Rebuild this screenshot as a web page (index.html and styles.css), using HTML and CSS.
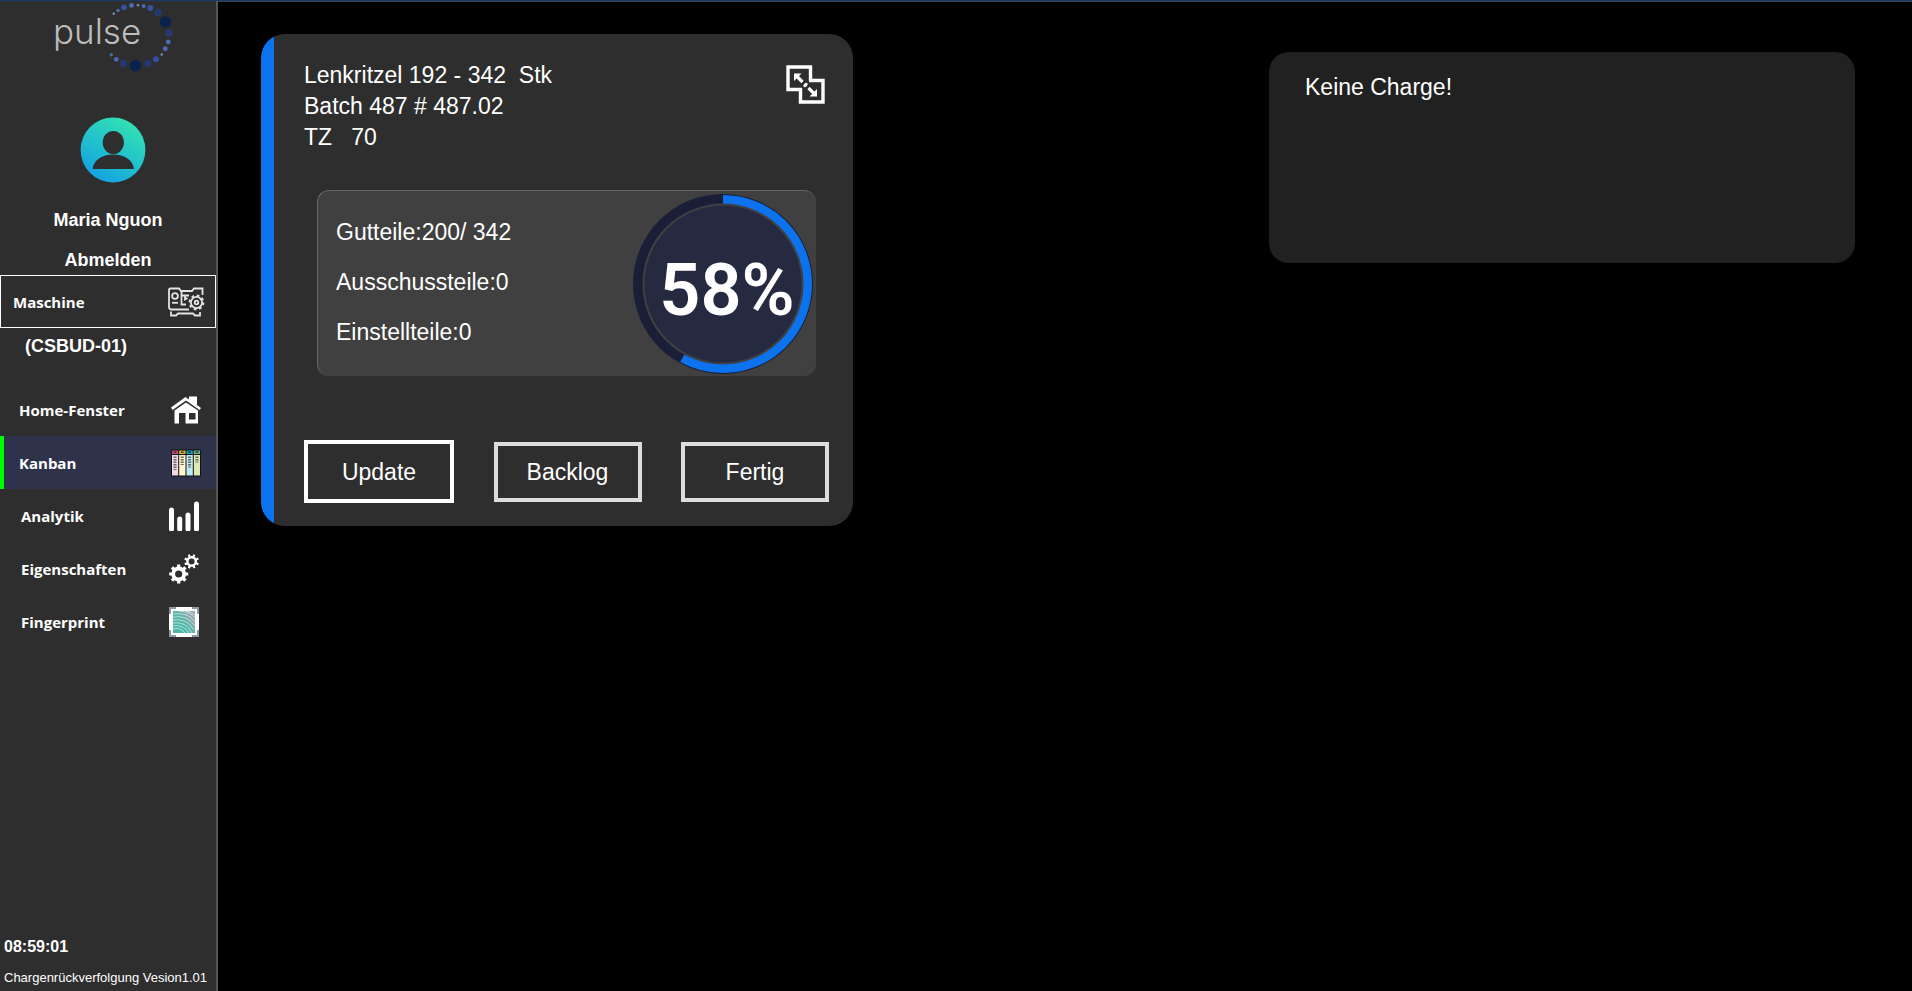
FILE: index.html
```html
<!DOCTYPE html>
<html lang="de">
<head>
<meta charset="utf-8">
<title>Pulse – Kanban</title>
<link rel="stylesheet" href="styles.css">
</head>
<body>
<div class="app">
  <aside class="sidebar">
    <svg class="logo" viewBox="54 1 120 72" role="img" aria-label="pulse">
      <text class="logo-text" x="53" y="44">pulse</text>
      <g fill="#7f93b5"><circle cx="113.7" cy="13.7" r="1.2"/><circle cx="138" cy="5.3" r="1.2"/><circle cx="161.7" cy="54.5" r="1.2"/></g>
      <g fill="#4a6cb0"><circle cx="118" cy="10.5" r="1.8"/><circle cx="131.5" cy="5.4" r="2.4"/><circle cx="143.7" cy="6" r="1.9"/><circle cx="168.3" cy="42" r="2.4"/><circle cx="165.3" cy="48.7" r="2.4"/><circle cx="116.3" cy="59.3" r="2.4"/><circle cx="111.3" cy="54.7" r="1.7"/></g>
      <g fill="#3450a0"><circle cx="124" cy="7.3" r="2.9"/><circle cx="150.3" cy="8" r="3"/><circle cx="156" cy="59.3" r="3"/></g>
      <g fill="#25386f"><circle cx="158" cy="12.7" r="3.8"/><circle cx="169" cy="33" r="3.8"/><circle cx="147.7" cy="63.5" r="3.8"/><circle cx="123.5" cy="63.5" r="3.8"/></g>
      <g fill="#06224d"><circle cx="165.5" cy="22" r="5.7"/><circle cx="135.5" cy="65.7" r="5.7"/></g>
    </svg>
    <svg class="avatar" viewBox="0 0 66 66" aria-hidden="true">
      <defs><linearGradient id="avatar-fill" x1="0.2" y1="1" x2="0.8" y2="0"><stop offset="0" stop-color="#129fe6"/><stop offset="0.5" stop-color="#22c3cb"/><stop offset="1" stop-color="#34e4ae"/></linearGradient></defs>
      <circle cx="33" cy="33" r="32.4" fill="url(#avatar-fill)"/>
      <ellipse cx="33.3" cy="25.5" rx="10.6" ry="11.5" fill="#2e2e2e"/>
      <path d="M12.6 52C13.5 43 22 37.5 33.3 37.5S53 43 54 52Z" fill="#2e2e2e"/>
    </svg>
    <p class="user">Maria Nguon</p>
    <a class="logout" href="#abmelden">Abmelden</a>
    <button class="machine" type="button">Maschine
      <svg class="machine-icon" viewBox="0 0 38 30" fill="none" stroke="#e4e4e4" stroke-width="1.8" aria-hidden="true">
        <path d="M22 22.5H4.500Q2 22.500 2 20V3Q2 1.500 3.500 1.500H12L14 4H25L27 1.500H35.500V8"/>
        <path d="M14.500 3V17.500H19M14.500 8.500H22M18 8.500V12.500L20.500 11"/>
        <circle cx="8" cy="9" r="2.900"/><path d="M5 15.800H11"/>
        <path d="M4 24.500V28.500H9L11 26.500H26L28 28.500H33V25"/>
        <circle cx="29.500" cy="15.500" r="5.600"/><circle cx="29.500" cy="15.500" r="1.800"/>
        <circle cx="29.500" cy="15.500" r="7" stroke-width="1.800" stroke-dasharray="2.750 2.750"/>
      </svg>
    </button>
    <p class="machine-id">(CSBUD-01)</p>
    <nav class="nav">
      <a class="nav-item" href="#home">Home-Fenster
        <svg class="nav-icon" viewBox="0 0 30 30" aria-hidden="true">
          <path d="M0 12.500 14.500 2 18 4.500V1.500H26V10L30 13 28.500 15 15 5.500 1.500 15Z" fill="#fff"/>
          <path fill-rule="evenodd" d="M3.500 15.500 15 7.500 27 15.500V28.500H14.500V18H8V28.500H3.500ZM18 18V24.500H24.500V18Z" fill="#fff"/>
        </svg>
      </a>
      <a class="nav-item nav-item-active" href="#kanban" aria-current="page">Kanban
        <svg class="nav-icon" viewBox="0 0 30 30" aria-hidden="true">
          <rect y="1.500" width="30" height="27" rx="1" fill="#111"/>
          <path d="M1 2.500H7.200V6H1Z" fill="#c9527c"/><path d="M8.200 2.500H14.500V6H8.200Z" fill="#ddb43c"/><path d="M15.500 2.500H21.800V6H15.500Z" fill="#16a3c4"/><path d="M22.800 2.500H29V6H22.800Z" fill="#70b78b"/>
          <path d="M1 7H7.200V27.500H1Z" fill="#f3d8e8"/><path d="M8.200 7H14.500V27.500H8.200Z" fill="#fff5cf"/><path d="M15.500 7H21.800V27.500H15.500Z" fill="#bdebf3"/><path d="M22.800 7H29V27.500H22.800Z" fill="#dcebb0"/>
          <g stroke="#666" stroke-width="3" stroke-dasharray="1.500 1"><path d="M4 8.500V22"/><path d="M11.200 8.500V17"/><path d="M18.600 8.500V19.500"/><path d="M26 8.500V14.500"/></g>
          <path d="M2.500 4.200H5.500M10 4.200H12.700M17.200 4.200H20M24.500 4.200H27.500" stroke="#222" stroke-width="1.200"/>
        </svg>
      </a>
      <a class="nav-item nav-item-inset" href="#analytik">Analytik
        <svg class="nav-icon" viewBox="0 0 30 30" stroke="#fff" stroke-width="5" stroke-linecap="round" aria-hidden="true"><path d="M2.500 9V28M10.700 18V28M19 14V28M27.500 3V28"/></svg>
      </a>
      <a class="nav-item nav-item-inset" href="#eigenschaften">Eigenschaften
        <svg class="nav-icon" viewBox="0 0 30 30" fill="none" stroke="#fff" aria-hidden="true">
          <circle cx="9.700" cy="20" r="5.500" stroke-width="3.800"/><path d="M9.700 10.500V14M9.700 26V29.500M.2 20H3.500M16 20H19.200M3 13.300 5.500 15.800M14 24.200 16.400 26.700M16.400 13.300 14 15.800M5.500 24.200 3 26.700" stroke-width="3.200"/>
          <circle cx="22.600" cy="7.400" r="4.200" stroke-width="2.400"/><g transform="rotate(22 22.600 7.400)"><path d="M22.600 0V3M22.600 11.800V14.800M15.200 7.400H18.200M27 7.400H30M17.400 2.200 19.500 4.300M25.700 10.500 27.800 12.600M27.800 2.200 25.700 4.300M19.500 10.500 17.400 12.600" stroke-width="2.200"/></g>
        </svg>
      </a>
      <a class="nav-item nav-item-inset" href="#fingerprint">Fingerprint
        <svg class="nav-icon" viewBox="0 0 30 30" fill="none" aria-hidden="true">
          <defs><linearGradient id="print-fill" x1="0.2" y1="0.7" x2="0.8" y2="0.2"><stop offset="0.300" stop-color="#4cb8aa"/><stop offset="1" stop-color="#93a9ad"/></linearGradient></defs>
          <path d="M0 0H30V30H0Z" fill="#fff"/>
          <path d="M1 7V1H7M23 1H29V7M29 23V29H23M7 29H1V23" stroke="#8d9aa6" stroke-width="2"/>
          <path d="M4 4H26V26H4Z" fill="url(#print-fill)"/>
          <g stroke="#dff2f0" stroke-width=".700"><path d="M4 7Q20 5 26 15M4 10Q19 8 26 19M4 13Q18 11 25 23M4 16Q17 14 23 26M4 19Q14 17 20 26M4 22Q12 20 16 26M10 4Q22 5 26 11M17 4Q23 5 26 8"/></g>
        </svg>
      </a>
    </nav>
    <footer class="foot">
      <time class="clock">08:59:01</time>
      <p class="version">Chargenrückverfolgung Vesion1.01</p>
    </footer>
  </aside>
  <main class="board">
    <article class="card">
      <header class="card-head">
        <p class="card-title">Lenkritzel 192 - 342  Stk
Batch 487 # 487.02
TZ   70</p>
        <button class="expand" type="button" aria-label="Vergrößern">
          <svg class="expand-icon" viewBox="0 0 39 39" fill="none" stroke="#fff" aria-hidden="true">
            <path d="M16 24.500H2V2H24.500V15.500M23 15.500H37V37H14.500V23" stroke-width="3.400"/>
            <path d="M11 11.500 16.500 17M22.500 23 28 28.500" stroke-width="3.200"/>
            <path d="M8 8.500H15.500L8 16ZM31 31.500V24L23.500 31.500Z" fill="#fff" stroke="none"/>
            <ellipse cx="19.500" cy="20" rx="2.600" ry="1.600" transform="rotate(-45 19.500 20)" fill="#fff" stroke="none"/>
          </svg>
        </button>
      </header>
      <section class="stats">
        <div class="counts">
          <p>Gutteile:200/ 342</p>
          <p>Ausschussteile:0</p>
          <p>Einstellteile:0</p>
        </div>
        <div class="gauge">
          <svg class="gauge-ring" viewBox="0 0 182 180" fill="none" aria-hidden="true">
            <circle cx="91" cy="90" r="90" fill="#1a1e36"/>
            <circle cx="91" cy="90" r="84.500" stroke="#0d72ee" stroke-width="9" pathLength="100" stroke-dasharray="58 42" transform="rotate(-90 91 90)"/>
            <circle cx="91" cy="90" r="79.500" fill="#262a40" stroke="#404044" stroke-width="2"/>
          </svg>
          <span class="gauge-value">58%</span>
        </div>
      </section>
      <div class="actions">
        <button class="action action-focus" type="button">Update</button>
        <button class="action" type="button">Backlog</button>
        <button class="action" type="button">Fertig</button>
      </div>
    </article>
    <article class="empty-card">Keine Charge!</article>
  </main>
</div>
</body>
</html>
```
FILE: styles.css
```css
* { box-sizing: border-box; }
body {
  margin: 0;
  background: #000;
  color: #fff;
  font-family: "Liberation Sans", Arial, sans-serif;
}
p { margin: 0; }
button { font: inherit; color: inherit; background: none; cursor: pointer; border-radius: 0; }
a { color: inherit; text-decoration: none; }

.app {
  display: grid;
  grid-template-columns: 218px minmax(0, 1fr);
  min-height: 100vh;
  border-top: 1px solid #173a66;
}

/* Sidebar */
.sidebar {
  display: flex;
  flex-direction: column;
  align-items: stretch;
  background: #2e2e2e;
  border-right: 2px solid #555;
}
.logo { width: 120px; height: 72px; margin-left: 54px; }
.logo-text { font-family: Inter, sans-serif; font-weight: 300; font-size: 35px; fill: #bdbdbd; }
.avatar { width: 66px; height: 66px; margin: 44px 0 0 80px; }
.user, .logout, .machine-id { font-size: 18px; line-height: 20px; font-weight: bold; }
.user { margin-top: 27px; text-align: center; }
.logout { margin: 20px 0 5px; text-align: center; }
.machine {
  display: flex;
  align-items: center;
  justify-content: space-between;
  height: 53px;
  padding: 0 10px 0 12px;
  border: 1px solid #fff;
  font: bold 15px/20px "Open Sans", "Noto Sans", sans-serif;
}
.machine-icon { width: 38px; height: 30px; }
.machine-id { margin: 8px 0 27px 25px; }
.nav { display: flex; flex-direction: column; }
.nav-item {
  display: flex;
  align-items: center;
  justify-content: space-between;
  height: 53px;
  padding: 0 15px;
  border-left: 4px solid transparent;
  font: bold 15px/20px "Open Sans", "Noto Sans", sans-serif;
}
.nav-item-active { background: #2e334b; border-left-color: #0f0; }
.nav-item-inset { padding: 0 17px; }
.nav-icon { width: 30px; height: 30px; }
.foot { margin-top: auto; padding: 0 0 4px 4px; }
.clock { display: block; font-size: 16px; line-height: 20px; font-weight: bold; }
.version { margin-top: 12px; font-size: 13px; line-height: 18px; white-space: nowrap; }

/* Board */
.board {
  display: grid;
  grid-template-columns: 592fr 586fr;
  column-gap: 416px;
  align-items: start;
  padding: 32px 57px 33px 43px;
  border-top: 1px solid #444;
  font-size: 23px;
  line-height: 31px;
}
.card {
  padding: 26px 24px 23px 43px;
  background: linear-gradient(to right, #0d72ee 13px, #2e2e2e 13px);
  border-radius: 24px;
}
.card-head { display: flex; justify-content: space-between; align-items: flex-start; }
.card-title { white-space: pre-wrap; }
.expand { padding: 0; margin: 5px 4px 0 0; border: 0; display: flex; }
.expand-icon { width: 39px; height: 39px; }
.stats {
  display: flex;
  align-items: center;
  justify-content: space-between;
  height: 186px;
  margin: 37px 13px 0 13px;
  padding: 0 2px 0 18px;
  background: #404040;
  border: 1px solid #666;
  border-width: 1px 0 0 1px;
  border-radius: 12px;
}
.counts { display: grid; row-gap: 19px; padding-bottom: 3px; }
.gauge { display: grid; place-items: center; }
.gauge-ring { grid-area: 1 / 1; width: 182px; height: 180px; }
.gauge-value { grid-area: 1 / 1; font: 600 72px/84px Roboto, sans-serif; padding: 14px 0 0 8px; }
.actions { display: flex; justify-content: space-between; align-items: center; margin-top: 64px; }
.action {
  width: 148px;
  height: 60px;
  padding: 2px 0 0;
  border: 4px solid #ddd;
}
.action-focus { width: 150px; height: 63px; border-color: #fff; }
.empty-card {
  min-height: 211px;
  margin-top: 18px;
  padding: 20px 36px;
  background: #212121;
  border-radius: 20px;
}
```
